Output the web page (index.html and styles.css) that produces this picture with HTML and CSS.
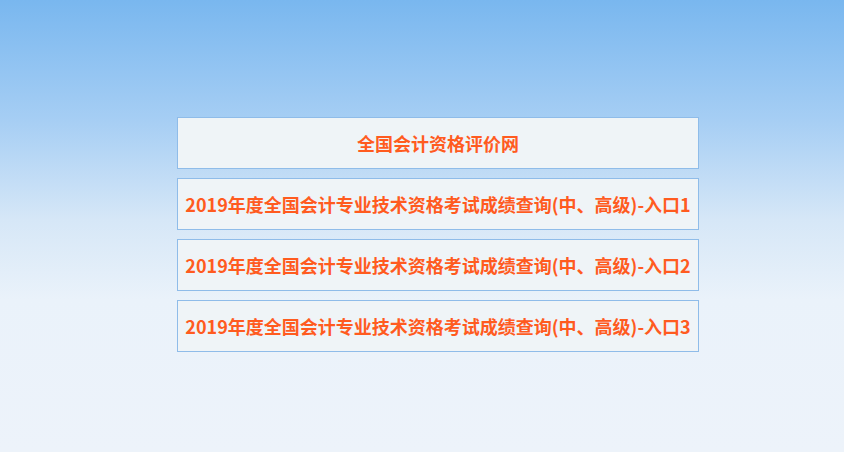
FILE: index.html
```html
<!DOCTYPE html>
<html lang="zh-CN">
<head>
<meta charset="utf-8">
<title>全国会计资格评价网</title>
<link rel="stylesheet" href="styles.css">
</head>
<body>
<div class="wrap">
  <a class="item" href="#">全国会计资格评价网</a>
  <a class="item" href="#">2019年度全国会计专业技术资格考试成绩查询(中、高级)-入口1</a>
  <a class="item" href="#">2019年度全国会计专业技术资格考试成绩查询(中、高级)-入口2</a>
  <a class="item" href="#">2019年度全国会计专业技术资格考试成绩查询(中、高级)-入口3</a>
</div>
</body>
</html>
```
FILE: styles.css
```css
html, body {
  margin: 0;
  padding: 0;
  height: 100%;
}
body {
  background: linear-gradient(to bottom, #79b7ef 0px, #a6cef4 120px, #d6e7f7 220px, #eaf2fa 300px, #edf3fa 452px);
  background-repeat: no-repeat;
  background-color: #edf3fa;
  font-family: "Microsoft YaHei", "Noto Sans CJK SC", "Noto Sans", sans-serif;
}
.wrap {
  display: flex;
  flex-direction: column;
  gap: 9px;
  width: 522px;
  padding: 117px 0 0 177px;
}
.item {
  display: flex;
  align-items: center;
  justify-content: center;
  height: 50px;
  border: 1px solid #8fbce9;
  background: #eff4f7;
  color: #ff5b1f;
  font-size: 18px;
  font-weight: bold;
  text-decoration: none;
  white-space: nowrap;
  letter-spacing: 0;
}
```
